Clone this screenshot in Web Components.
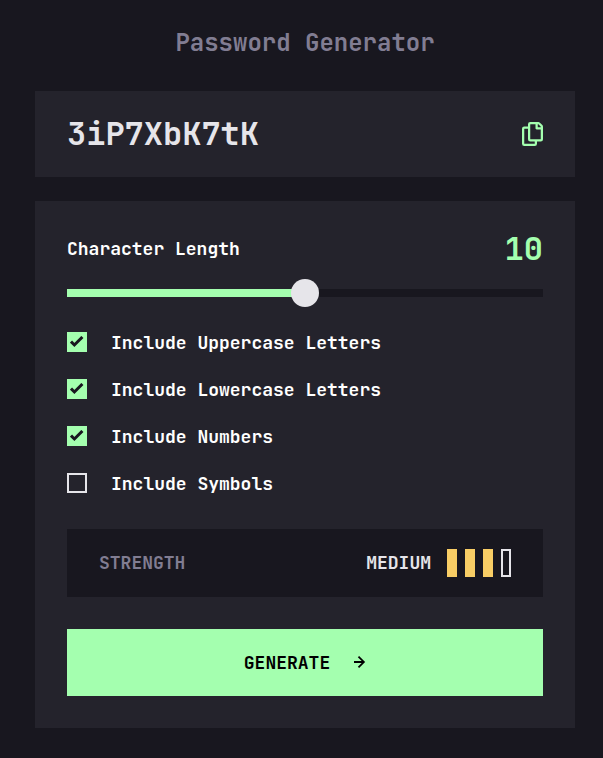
<!DOCTYPE html>
<html lang="en">
<head>
<meta charset="utf-8">
<title>Password Generator</title>
<style>
html,body{margin:0;background:#18171f}
body{width:603px;height:758px;overflow:hidden;font-family:"JetBrains Mono","DejaVu Sans Mono",monospace;font-size:18px;font-weight:700;line-height:24px;color:#e6e5ea}
</style>
</head>
<body>
<password-generator></password-generator>
<script>
const define = (name, html) => {
  const t = document.createElement('template');
  t.innerHTML = html;
  customElements.define(name, class extends HTMLElement {
    constructor() {
      super();
      this.attachShadow({mode: 'open'}).append(t.content.cloneNode(true));
    }
  });
};

define('copy-icon', `<style>:host{display:block;width:21px;height:24px}svg{display:block}</style>
<svg width="21" height="24" viewBox="0 0 21 24"><path fill="#a4ffaf" d="M20.341 3.091 17.909.659A2.25 2.25 0 0 0 16.319 0H8.25A2.25 2.25 0 0 0 6 2.25V4.5H2.25A2.25 2.25 0 0 0 0 6.75v15A2.25 2.25 0 0 0 2.25 24h10.5A2.25 2.25 0 0 0 15 21.75V19.5h3.75A2.25 2.25 0 0 0 21 17.25V4.682a2.25 2.25 0 0 0-.659-1.591ZM12.469 21.75H2.53a.281.281 0 0 1-.281-.281V7.03a.281.281 0 0 1 .281-.281H6v10.5a2.25 2.25 0 0 0 2.25 2.25h4.5v1.969a.282.282 0 0 1-.281.281Zm6-4.5H8.53a.281.281 0 0 1-.281-.281V2.53a.281.281 0 0 1 .281-.281H13.5v4.125c0 .621.504 1.125 1.125 1.125h4.125v9.469a.282.282 0 0 1-.281.281Zm.281-12h-3v-3h.451c.075 0 .147.03.2.082L18.667 4.6a.283.283 0 0 1 .083.199v.451Z"/></svg>`);

define('password-display', `<style>:host{display:flex;align-items:center;justify-content:space-between;box-sizing:border-box;height:86px;padding:0 32px;background:#24232c;font-size:32px;line-height:42px}</style>
<span><slot></slot></span><copy-icon></copy-icon>`);

define('length-slider', `<style>:host{display:block}
.head{display:flex;justify-content:space-between;align-items:center;height:42px;color:#fff}
.value{font-size:32px;line-height:42px;color:#a4ffaf}
.track{display:flex;align-items:center;height:8px;margin-top:19px;background:linear-gradient(#a4ffaf,#a4ffaf) 0/50% 100% no-repeat #18171f}
.thumb{width:28px;height:28px;margin:0 auto;flex:none;border-radius:50%;background:#e6e5ea}</style>
<div class="head"><span><slot></slot></span><span class="value"><slot name="value"></slot></span></div>
<div class="track"><div class="thumb"></div></div>`);

define('check-option', `<style>:host{display:flex;align-items:center;gap:24px;height:24px;color:#fff}
span{padding-top:2px}
.box{display:grid;place-items:center;box-sizing:border-box;width:20px;height:20px;border:2px solid #e6e5ea}
svg{display:none}
:host([checked]) .box{background:#a4ffaf;border:0}
:host([checked]) svg{display:block}</style>
<div class="box"><svg width="14" height="12" viewBox="0 0 14 12"><path d="M1 5.607 4.393 9l8-8" fill="none" stroke="#18171f" stroke-width="3"/></svg></div><span><slot></slot></span>`);

define('strength-meter', `<style>:host{display:flex;align-items:center;justify-content:space-between;box-sizing:border-box;height:68px;padding:0 32px;background:#18171f}
.title{color:#817d92}.right{display:flex;align-items:center;gap:16px}.bars{display:flex;gap:8px}
i{box-sizing:border-box;width:10px;height:28px;background:#f8cd65}i:last-child{background:none;border:2px solid #e6e5ea}</style>
<span class="title"><slot></slot></span><div class="right"><span><slot name="level"></slot></span><div class="bars"><i></i><i></i><i></i><i></i></div></div>`);

define('generate-button', `<style>:host{display:flex;align-items:center;justify-content:center;gap:24px;height:67px;background:#a4ffaf;color:#000}svg{display:block;padding-bottom:1px}</style>
<span><slot></slot></span><svg width="12" height="12" viewBox="0 0 12 12"><path d="m5.106 12 6-6-6-6-1.265 1.265 3.841 3.84H.001v1.79h7.681l-3.841 3.84z"/></svg>`);

define('password-generator', `<style>:host{display:block;width:540px;margin-left:35px;padding-top:27px}
h1{margin:0 0 32px;font-size:24px;line-height:32px;font-weight:inherit;text-align:center;color:#817d92}
.panel{box-sizing:border-box;height:527px;margin-top:24px;padding:27px 32px 32px;background:#24232c}
.options{display:grid;gap:23px;margin:33px 0 34px}
generate-button{margin-top:32px}</style>
<h1>Password Generator</h1>
<password-display>3iP7XbK7tK</password-display>
<div class="panel">
<length-slider>Character Length<span slot="value">10</span></length-slider>
<div class="options"><check-option checked>Include Uppercase Letters</check-option><check-option checked>Include Lowercase Letters</check-option><check-option checked>Include Numbers</check-option><check-option>Include Symbols</check-option></div>
<strength-meter>STRENGTH<span slot="level">MEDIUM</span></strength-meter>
<generate-button>GENERATE</generate-button>
</div>`);
</script>
</body>
</html>
